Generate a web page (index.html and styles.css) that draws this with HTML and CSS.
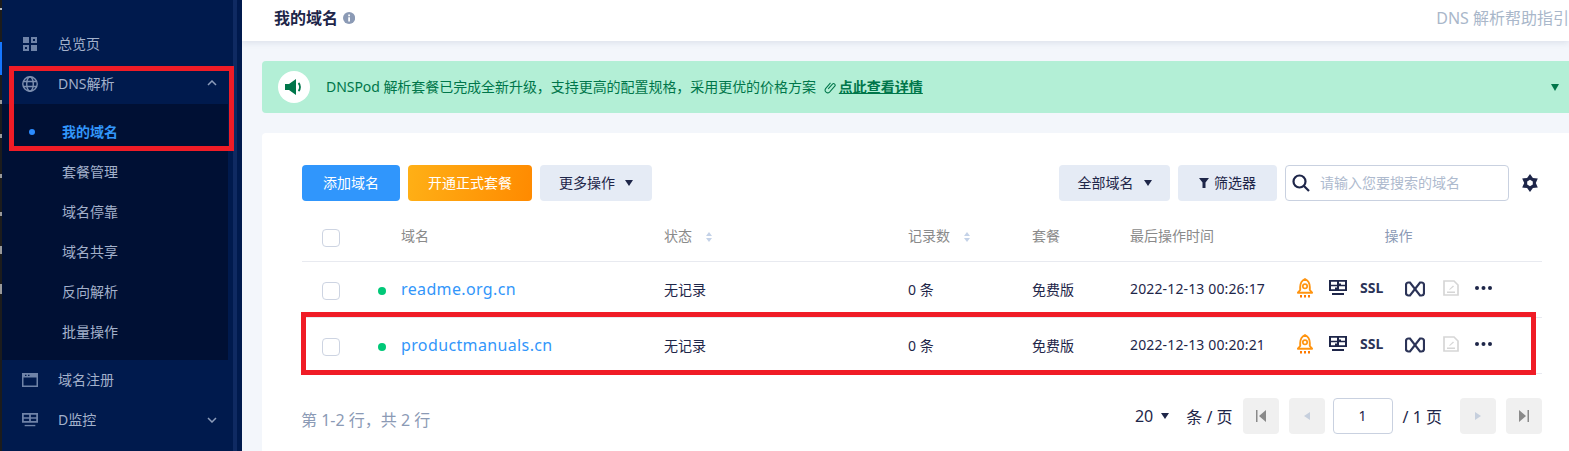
FILE: index.html
```html
<!DOCTYPE html>
<html lang="zh-CN">
<head>
<meta charset="utf-8">
<title>我的域名</title>
<link rel="stylesheet" href="styles.css">
</head>
<body>
<svg class="defs" width="0" height="0" aria-hidden="true">
  <symbol id="rocket" viewBox="0 0 16 20">
    <path d="M8 1C5 2.500 3.200 5.500 3.200 9v3L.9 14.700h14.200L12.800 12V9C12.800 5.500 11 2.500 8 1z" fill="none" stroke="#ff9410" stroke-width="1.900" stroke-linejoin="round"/>
    <circle cx="8" cy="8.300" r="2.200" fill="none" stroke="#ff9410" stroke-width="1.700"/>
    <path d="M3 17h2v2.500H3zM7 17h2v2.500H7zM11 17h2v2.500h-2z" fill="#ff7a00"/>
  </symbol>
  <symbol id="monitor" viewBox="0 0 18 15">
    <path d="M0 0h18v11H0zM2 1.800v3h6v-3zm8 0v1.700h2v1.300h4v-3zM2 6.200v3h4V7.500h2V6.200zm8 0v3h6v-3z" fill="#1e2649" fill-rule="evenodd"/>
    <path d="M3 13h12v2H3z" fill="#1e2649"/>
  </symbol>
  <symbol id="cname" viewBox="0 0 20 16">
    <path d="M3.500 1.500h1.500L15 14.500h1.500C18 14.500 19 13.500 19 12V4c0-1.500-1-2.500-2.500-2.500H15L5 14.500H3.500C2 14.500 1 13.500 1 12V4c0-1.500 1-2.500 2.500-2.500z" fill="none" stroke="#2b3357" stroke-width="2.200"/>
  </symbol>
  <symbol id="note" viewBox="0 0 16 16">
    <path d="M1 1h10l4 4v10H1z" fill="none" stroke="#d6d6d6" stroke-width="1.700"/>
    <path d="M4 11.500h8v1.500H4zM6 9.500l4-4 1 1-4 3.200z" fill="#d6d6d6"/>
  </symbol>
  <symbol id="more" viewBox="0 0 17 4">
    <circle cx="2" cy="2" r="2" fill="#1e2649"/><circle cx="8.500" cy="2" r="2" fill="#1e2649"/><circle cx="15" cy="2" r="2" fill="#1e2649"/>
  </symbol>
  <symbol id="sorter" viewBox="0 0 6 10">
    <path d="M3 0l3 4H0z" fill="#c4d2e8"/><path d="M3 10l3-4H0z" fill="#c4d2e8"/>
  </symbol>
</svg>

<div class="edge"><span class="edge-mark"></span></div>

<aside class="sidebar">
  <nav class="menu">
    <a class="item">
      <svg class="item-icon grid-icon" viewBox="0 0 14 14"><path d="M0 0h6v6H0zM8 0h6v6H8zM0 8h6v6H0zM8 8h6v6H8z" fill="#6f83a8"/><path d="M10 2h2v2h-2zM2 10h2v2H2z" fill="#001a4d"/></svg>
      <span>总览页</span>
    </a>
    <a class="item">
      <svg class="item-icon" viewBox="0 0 16 16" fill="none" stroke="#7d8fb0" stroke-width="1.400"><circle cx="8" cy="8" r="7.200"/><ellipse cx="8" cy="8" rx="3.300" ry="7.200"/><path d="M1 5.500h14M1 10.500h14"/></svg>
      <span>DNS解析</span>
      <svg class="chev up" viewBox="0 0 10 6"><path d="M1 5l4-4 4 4" fill="none" stroke="#8c9cba" stroke-width="1.500"/></svg>
    </a>
    <div class="sub">
      <a class="sub-item active"><i class="dot"></i><span>我的域名</span></a>
      <a class="sub-item"><span>套餐管理</span></a>
      <a class="sub-item"><span>域名停靠</span></a>
      <a class="sub-item"><span>域名共享</span></a>
      <a class="sub-item"><span>反向解析</span></a>
      <a class="sub-item"><span>批量操作</span></a>
    </div>
    <a class="item">
      <svg class="item-icon" viewBox="0 0 16 14"><path d="M0 0h16v14H0zM1.500 4.500V12.500h13V4.500zM3 1.700v1.300h1.500V1.700zM6 1.700v1.300h1.500V1.700z" fill="#6f83a8" fill-rule="evenodd"/></svg>
      <span>域名注册</span>
    </a>
    <a class="item">
      <svg class="item-icon" viewBox="0 0 18 16"><path d="M0 0h18v11H0zM2 2v3h6V2zm8 0v3h6V2zM2 6.500V9h6V6.500zm8 0V9h6V6.500z" fill="#6f83a8" fill-rule="evenodd"/><path d="M3 13.500h12V15H3z" fill="#6f83a8"/></svg>
      <span>D监控</span>
      <svg class="chev" viewBox="0 0 10 6"><path d="M1 1l4 4 4-4" fill="none" stroke="#8c9cba" stroke-width="1.500"/></svg>
    </a>
  </nav>
  <div class="rail"></div>
</aside>

<main class="main">
  <header class="top">
    <h1 class="title">我的域名</h1>
    <svg class="info" viewBox="0 0 14 14"><circle cx="7" cy="7" r="7" fill="#8b9ab5"/><path d="M6 6h2v5H6zM6 3h2v2H6z" fill="#fff"/></svg>
    <a class="help">DNS 解析帮助指引</a>
  </header>

  <section class="notice">
    <span class="horn">
      <svg viewBox="0 0 18 16" width="18" height="16"><path d="M0 5h4l7-5v16l-7-5H0z" fill="#00764a"/><path d="M13.500 4c2 2 2 6 0 8" fill="none" stroke="#00764a" stroke-width="1.800"/></svg>
    </span>
    <p class="notice-text">DNSPod 解析套餐已完成全新升级，支持更高的配置规格，采用更优的价格方案<svg class="link-ico" viewBox="0 0 14 14"><path d="M4.500 8.500l4.600-5.200a1.700 1.700 0 0 1 2.500 2.300L6 12a2.900 2.900 0 0 1-4.300-3.800L7 2" fill="none" stroke="#00764a" stroke-width="1.100"/></svg><a class="notice-link">点此查看详情</a></p>
    <i class="notice-caret"></i>
  </section>

  <section class="card">
    <div class="toolbar">
      <button class="btn primary"><span>添加域名</span></button>
      <button class="btn upgrade"><span>开通正式套餐</span></button>
      <button class="btn plain w-more"><span>更多操作</span><i class="caret"></i></button>
      <span class="spacer"></span>
      <button class="btn plain w-all"><span>全部域名</span><i class="caret"></i></button>
      <button class="btn plain w-filter"><svg class="funnel" viewBox="0 0 10 10"><path d="M0 0h10L6.500 4.500V10h-3V4.500z" fill="#1e2649"/></svg><span>筛选器</span></button>
      <label class="search">
        <svg viewBox="0 0 18 18" width="18" height="18"><circle cx="7.500" cy="7.500" r="6" fill="none" stroke="#1e2649" stroke-width="2.200"/><path d="M12 12l5 5" stroke="#1e2649" stroke-width="2.200"/></svg>
        <span>请输入您要搜索的域名</span>
      </label>
      <svg class="gear" viewBox="0 0 18 18"><path fill-rule="evenodd" fill="#1e2649" d="M9 0l2.900 4 4.900.5-2 4.500 2 4.500-4.900.5L9 18l-2.900-4-4.900-.5 2-4.500-2-4.500L6.100 4zM9 5.800L6.200 7.400v3.200L9 12.200l2.800-1.600V7.400z"/></svg>
    </div>

    <div class="table">
      <div class="row head">
        <span class="c-check"><i class="box"></i></span>
        <span>域名</span>
        <span>状态<svg class="sort"><use href="#sorter"/></svg></span>
        <span>记录数<svg class="sort"><use href="#sorter"/></svg></span>
        <span>套餐</span>
        <span>最后操作时间</span>
        <span class="c-ops-title">操作</span>
      </div>
      <div class="row body-row">
        <span class="c-check"><i class="box"></i><i class="state"></i></span>
        <a class="domain cell">readme.org.cn</a>
        <span class="cell">无记录</span>
        <span class="cell">0 条</span>
        <span class="cell">免费版</span>
        <span class="cell time">2022-12-13 00:26:17</span>
        <span class="ops">
          <svg class="o-rocket"><use href="#rocket"/></svg>
          <svg class="o-monitor"><use href="#monitor"/></svg>
          <b class="ssl">SSL</b>
          <svg class="o-cname"><use href="#cname"/></svg>
          <svg class="o-note"><use href="#note"/></svg>
          <svg class="o-more"><use href="#more"/></svg>
        </span>
      </div>
      <div class="row body-row">
        <span class="c-check"><i class="box"></i><i class="state"></i></span>
        <a class="domain cell">productmanuals.cn</a>
        <span class="cell">无记录</span>
        <span class="cell">0 条</span>
        <span class="cell">免费版</span>
        <span class="cell time">2022-12-13 00:20:21</span>
        <span class="ops">
          <svg class="o-rocket"><use href="#rocket"/></svg>
          <svg class="o-monitor"><use href="#monitor"/></svg>
          <b class="ssl">SSL</b>
          <svg class="o-cname"><use href="#cname"/></svg>
          <svg class="o-note"><use href="#note"/></svg>
          <svg class="o-more"><use href="#more"/></svg>
        </span>
      </div>
    </div>

    <div class="pager">
      <span class="total">第 1-2 行，共 2 行</span>
      <span class="spacer"></span>
      <span class="size">20<i class="caret"></i></span>
      <span class="per">条 / 页</span>
      <button class="pg"><svg viewBox="0 0 10 12" width="10" height="12"><path d="M0 0h1.500v12H0zM10 0v12L3 6z" fill="#8a8a8a"/></svg></button>
      <button class="pg"><svg viewBox="0 0 6 8" width="6" height="8"><path d="M6 0v8L0 4z" fill="#c6cfdd"/></svg></button>
      <span class="pg-input">1</span>
      <span class="pages">/ 1 页</span>
      <button class="pg"><svg viewBox="0 0 6 8" width="6" height="8"><path d="M0 0v8l6-4z" fill="#c6cfdd"/></svg></button>
      <button class="pg"><svg viewBox="0 0 10 12" width="10" height="12"><path d="M8.500 0H10v12H8.500zM0 0v12l7-6z" fill="#8a8a8a"/></svg></button>
    </div>
  </section>
</main>

<div class="mark mark-menu"></div>
<div class="mark mark-row"></div>
</body>
</html>
```
FILE: styles.css
```css
* { box-sizing: border-box; }
html, body { height: 100%; }
body {
  margin: 0;
  height: 451px;
  overflow: hidden;
  display: flex;
  position: relative;
  background: #f3f6fb;
  font-family: "Noto Sans", "Noto Sans CJK SC", sans-serif;
  font-size: 14px;
  color: #1e2649;
}
.defs { position: absolute; }
i { display: inline-block; font-style: normal; }
a { color: inherit; text-decoration: none; }
button { font: inherit; border: 0; padding: 0; }

.edge {
  width: 2px; flex: none; padding-top: 42px;
  background: linear-gradient(#1c1c1c 8px, #bbb 8px 10px, #1c1c1c 10px 100px, #999 100px 104px, #1c1c1c 104px 134px, #999 134px 138px, #1c1c1c 138px 174px, #999 174px 178px, #1c1c1c 178px 212px, #999 212px 216px, #1c1c1c 216px 246px, #999 246px 254px, #1c1c1c 254px 284px, #999 284px 294px, #1c1c1c 294px);
}
.edge-mark { display: block; height: 33px; background: #1677ff; }

.sidebar { width: 240px; flex: none; display: flex; background: #001a4d; }
.menu { width: 226px; flex: none; padding-top: 24px; }
.rail { width: 4px; margin-left: 5px; background: #0f2a62; }
.item { display: flex; align-items: center; height: 40px; color: #a3b1cb; position: relative; }
.item-icon { width: 16px; height: 16px; margin: 0 20px; flex: none; }
.grid-icon { width: 14px; height: 14px; margin: 0 21px; }
.item span { padding-bottom: 2px; }
.chev { width: 10px; height: 6px; position: absolute; left: 205px; top: 17px; }
.chev.up { top: 16px; }
.sub { background: #001034; padding: 8px 0; }
.sub-item { display: flex; align-items: center; height: 40px; padding-left: 60px; color: #a3b1cb; position: relative; }
.sub-item span { padding-bottom: 2px; }
.sub-item.active { color: #3296fa; font-weight: 700; }
.dot { position: absolute; left: 27px; top: 17px; width: 6px; height: 6px; border-radius: 50%; background: #2b8cff; }

.main { flex: 1; min-width: 0; display: flex; flex-direction: column; }
.top {
  height: 41px; flex: none; background: #fff;
  display: flex; align-items: center; padding: 0 0 6px 32px;
  box-shadow: 0 2px 6px rgba(30, 50, 100, .1);
  overflow: hidden; white-space: nowrap;
}
.title { margin: 0; font-size: 16px; font-weight: 700; color: #1e2649; line-height: 22px; }
.info { width: 14px; height: 14px; margin-left: 5px; }
.help { margin-left: 1081px; flex: none; font-size: 16px; color: #a9b7ca; padding-bottom: 1px; }

.notice {
  height: 52px; flex: none; margin: 20px 0 20px 20px;
  background: #b3efd6; border-radius: 4px 0 0 4px;
  display: flex; align-items: center; padding-left: 16px; color: #00764a;
}
.horn { width: 32px; height: 32px; flex: none; border-radius: 50%; background: #fff; display: flex; align-items: center; justify-content: center; }
.notice-text { margin: 0 0 2px 16px; font-size: 14px; white-space: nowrap; display: flex; align-items: center; letter-spacing: -.05px; }
.link-ico { width: 13px; height: 13px; margin: 2px 2px 0 8px; }
.notice-link { font-weight: 700; text-decoration: underline; letter-spacing: 0; }
.notice-caret { margin-left: auto; margin-right: 10px; border: 4px solid transparent; border-top: 7px solid #00764a; border-bottom: 0; }

.card { flex: 1; margin-left: 20px; background: #fff; border-radius: 4px 0 0 0; padding: 32px 27px 0 40px; }
.toolbar { display: flex; align-items: center; height: 36px; gap: 8px; margin-right: 3px; }
.spacer { flex: 1; }
.btn { height: 36px; border-radius: 4px; display: flex; align-items: center; justify-content: center; color: #1e2649; font-size: 14px; }
.btn span { padding-bottom: 2px; }
.primary { width: 98px; background: #3096fc; color: #fff; }
.upgrade { width: 124px; background: linear-gradient(100deg, #ffb016, #ff8a00); color: #fff; }
.plain { background: #e5ebf5; }
.w-more { width: 112px; }
.w-all { width: 111px; }
.w-filter { width: 99px; }
.caret { margin-left: 10px; border: 4px solid transparent; border-top: 6px solid #1e2649; border-bottom: 0; }
.funnel { width: 10px; height: 10px; margin-right: 5px; }
.search { width: 224px; height: 36px; border: 1px solid #c9d1e0; border-radius: 4px; display: flex; align-items: center; padding-left: 6px; color: #aebace; font-size: 14px; gap: 10px; }
.search span { padding-bottom: 2px; }
.gear { width: 18px; height: 18px; margin-left: 4px; }

.table { margin-top: 9px; }
.row { display: grid; grid-template-columns: 99px 263px 244px 124px 98px 135px 277px; align-items: center; height: 56px; border-bottom: 1px solid #e8eaf0; font-size: 14px; color: #1e2649; }
.row.head { height: 52px; color: #8a8a8a; padding-bottom: 2px; }
.c-check { position: relative; padding-left: 20px; padding-top: 2px; display: flex; align-items: center; }
.head .c-check { padding-top: 6px; }
.box { width: 18px; height: 18px; border: 1px solid #cdd4e2; border-radius: 4px; background: #fff; }
.state { margin-left: 38px; width: 8px; height: 8px; border-radius: 50%; background: #00c878; }
.cell { padding-bottom: 2px; }
.domain { font-size: 16px; color: #3296fa; letter-spacing: .37px; }
.time { letter-spacing: .01em; }
.sort { margin-left: 14px; width: 6px; height: 10px; vertical-align: -1px; }
.c-ops-title { text-align: center; color: #8b9ab5; padding-right: 10px; }
.ops { display: flex; align-items: center; padding-bottom: 4px; }
.o-rocket { width: 16px; height: 20px; margin-left: 32px; }
.o-monitor { width: 18px; height: 15px; margin-left: 16px; }
.ssl { font-size: 14px; font-weight: 700; margin-left: 13px; width: 24px; color: #2b3357; }
.o-cname { width: 20px; height: 16px; margin-left: 21px; margin-top: 2px; }
.o-note { width: 16px; height: 16px; margin-left: 18px; }
.o-more { width: 17px; height: 4px; margin-left: 16px; }

.pager { display: flex; align-items: center; height: 36px; margin-top: 24px; font-size: 16px; }
.total { color: #8b9ab5; margin-left: -1px; padding-top: 6px; font-size: 16px; }
.size { margin-right: 17px; display: flex; align-items: center; margin-left: -2px; }
.size .caret { margin-left: 8px; }
.per { margin-right: 10px; }
.pg { width: 36px; height: 36px; background: #f0f0f0; border-radius: 4px; margin-right: 10px; display: flex; align-items: center; justify-content: center; }
.pg-input { width: 60px; height: 36px; margin-left: -2px; border: 1px solid #c9d1e0; border-radius: 4px; text-align: center; line-height: 34px; font-size: 14px; }
.pages { margin-left: 10px; margin-right: 18px; }
.pager .pg:last-child { margin-right: 0; }

.mark { position: absolute; border: 5px solid #f01c26; pointer-events: none; }
.mark-menu { left: 9px; top: 66px; width: 225px; height: 85px; }
.mark-row { left: 301px; top: 312px; width: 1235px; height: 63px; }
```
